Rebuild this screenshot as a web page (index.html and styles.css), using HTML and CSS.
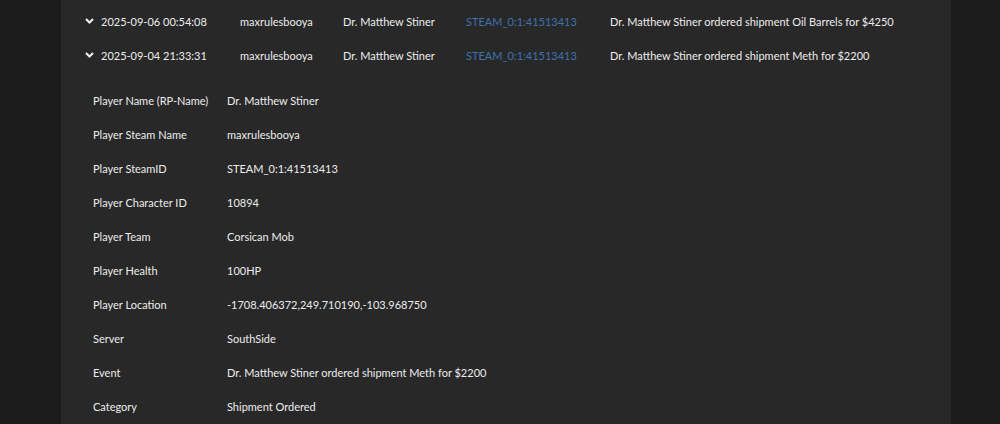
FILE: index.html
```html
<!DOCTYPE html>
<html>
<head>
<meta charset="utf-8">
<link rel="stylesheet" href="styles.css">
</head>
<body>
<div class="page">
  <div class="panel">
    <div class="log-row">
      <div class="cell date"><svg class="chev" width="9" height="6" viewBox="0 0 9 6"><polyline points="1,1 4.5,4.5 8,1" fill="none" stroke="#f2f2f2" stroke-width="2"/></svg>2025-09-06 00:54:08</div>
      <div class="cell">maxrulesbooya</div>
      <div class="cell">Dr. Matthew Stiner</div>
      <div class="cell link">STEAM_0:1:41513413</div>
      <div class="cell">Dr. Matthew Stiner ordered shipment Oil Barrels for $4250</div>
    </div>
    <div class="log-row">
      <div class="cell date"><svg class="chev" width="9" height="6" viewBox="0 0 9 6"><polyline points="1,1 4.5,4.5 8,1" fill="none" stroke="#f2f2f2" stroke-width="2"/></svg>2025-09-04 21:33:31</div>
      <div class="cell">maxrulesbooya</div>
      <div class="cell">Dr. Matthew Stiner</div>
      <div class="cell link">STEAM_0:1:41513413</div>
      <div class="cell">Dr. Matthew Stiner ordered shipment Meth for $2200</div>
    </div>
    <div class="details">
      <div class="d-row"><span class="label">Player Name (RP-Name)</span><span class="value">Dr. Matthew Stiner</span></div>
      <div class="d-row"><span class="label">Player Steam Name</span><span class="value">maxrulesbooya</span></div>
      <div class="d-row"><span class="label">Player SteamID</span><span class="value">STEAM_0:1:41513413</span></div>
      <div class="d-row"><span class="label">Player Character ID</span><span class="value">10894</span></div>
      <div class="d-row"><span class="label">Player Team</span><span class="value">Corsican Mob</span></div>
      <div class="d-row"><span class="label">Player Health</span><span class="value">100HP</span></div>
      <div class="d-row"><span class="label">Player Location</span><span class="value">-1708.406372,249.710190,-103.968750</span></div>
      <div class="d-row"><span class="label">Server</span><span class="value">SouthSide</span></div>
      <div class="d-row"><span class="label">Event</span><span class="value">Dr. Matthew Stiner ordered shipment Meth for $2200</span></div>
      <div class="d-row"><span class="label">Category</span><span class="value">Shipment Ordered</span></div>
    </div>
  </div>
</div>
</body>
</html>
```
FILE: styles.css
```css
html, body {
  margin: 0;
  padding: 0;
  background: #1b1b1b;
  height: 100%;
  overflow: hidden;
}
body {
  font-family: Lato, "Liberation Sans", sans-serif;
  font-size: 11px;
  color: #ececec;
}
.page {
  padding-left: 61px;
}
.panel {
  width: 890px;
  height: 424px;
  background: #282828;
  padding-top: 4px;
  box-sizing: border-box;
}
.log-row {
  display: grid;
  grid-template-columns: 155px 103px 123px 144px 1fr;
  height: 34px;
  align-items: center;
  padding-left: 24px;
}
.cell {
  white-space: nowrap;
}
.date {
  display: flex;
  align-items: center;
}
.chev {
  margin-right: 7px;
}
.link {
  color: #3f72ad;
}
.details {
  padding-top: 11px;
}
.d-row {
  display: flex;
  height: 34px;
  align-items: center;
  padding-left: 32px;
}
.label {
  width: 134px;
  flex: none;
}
```
